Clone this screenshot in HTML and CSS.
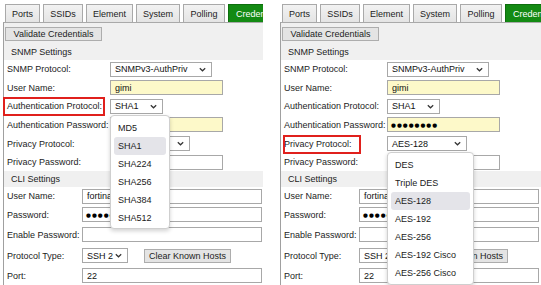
FILE: index.html
```html
<!DOCTYPE html>
<html>
<head>
<meta charset="utf-8">
<link rel="stylesheet" href="styles.css">
</head>
<body>
<div class="page">
  <div class="panel panel-a">
    <div class="tabs">
      <div class="tab t-ports">Ports</div>
      <div class="tab t-ssids">SSIDs</div>
      <div class="tab t-element">Element</div>
      <div class="tab t-system">System</div>
      <div class="tab t-polling">Polling</div>
      <div class="tab active">Credentials</div>
    </div>
    <div class="body">
      <div class="btnrow"><button class="btn validate">Validate Credentials</button></div>
      <div class="section">SNMP Settings</div>
      <div class="row h18"><span class="label">SNMP Protocol:</span><div class="select w-snmp"><span>SNMPv3-AuthPriv</span><svg class="chev" width="7" height="5" viewBox="0 0 7 5"><path d="M0.8 1.2 L3.5 3.8 L6.2 1.2" fill="none" stroke="#333" stroke-width="1.2"/></svg></div></div>
      <div class="row h19"><span class="label">User Name:</span><div class="input yellow w-short">gimi</div></div>
      <div class="row h18"><span class="label"><span class="hl hl-a">Authentication Protocol:</span></span><div class="select w-auth"><span>SHA1</span><svg class="chev" width="7" height="5" viewBox="0 0 7 5"><path d="M0.8 1.2 L3.5 3.8 L6.2 1.2" fill="none" stroke="#333" stroke-width="1.2"/></svg></div></div>
      <div class="row h19"><span class="label">Authentication Password:</span><div class="input yellow w-short dots">●●●●●●●●</div></div>
      <div class="row h19"><span class="label">Privacy Protocol:</span><div class="select w-priv"><span>AES-128</span><svg class="chev" width="7" height="5" viewBox="0 0 7 5"><path d="M0.8 1.2 L3.5 3.8 L6.2 1.2" fill="none" stroke="#333" stroke-width="1.2"/></svg></div></div>
      <div class="row h18"><span class="label">Privacy Password:</span><div class="input w-short"></div></div>
      <div class="section cli">CLI Settings</div>
      <div class="row h18 cli-row"><span class="label">User Name:</span><div class="input w-long">fortinadmin</div></div>
      <div class="row h19 cli-row"><span class="label">Password:</span><div class="input w-long dots">●●●●●●●●</div></div>
      <div class="row h21 cli-row"><span class="label">Enable Password:</span><div class="input w-long"></div></div>
      <div class="row h21 cli-row"><span class="label">Protocol Type:</span><div class="select w-ssh"><span>SSH 2</span><svg class="chev" width="7" height="5" viewBox="0 0 7 5"><path d="M0.8 1.2 L3.5 3.8 L6.2 1.2" fill="none" stroke="#333" stroke-width="1.2"/></svg></div><button class="btn clear">Clear Known Hosts</button></div>
      <div class="row h19 cli-row"><span class="label">Port:</span><div class="input w-long">22</div></div>
    </div>
    <ul class="popup popup-a">
      <li>MD5</li>
      <li class="sel">SHA1</li>
      <li>SHA224</li>
      <li>SHA256</li>
      <li>SHA384</li>
      <li>SHA512</li>
    </ul>
  </div>

  <div class="panel panel-b">
    <div class="tabs">
      <div class="tab t-ports">Ports</div>
      <div class="tab t-ssids">SSIDs</div>
      <div class="tab t-element">Element</div>
      <div class="tab t-system">System</div>
      <div class="tab t-polling">Polling</div>
      <div class="tab active">Credentials</div>
    </div>
    <div class="body">
      <div class="btnrow"><button class="btn validate">Validate Credentials</button></div>
      <div class="section">SNMP Settings</div>
      <div class="row h18"><span class="label">SNMP Protocol:</span><div class="select w-snmp"><span>SNMPv3-AuthPriv</span><svg class="chev" width="7" height="5" viewBox="0 0 7 5"><path d="M0.8 1.2 L3.5 3.8 L6.2 1.2" fill="none" stroke="#333" stroke-width="1.2"/></svg></div></div>
      <div class="row h19"><span class="label">User Name:</span><div class="input yellow w-short">gimi</div></div>
      <div class="row h18"><span class="label">Authentication Protocol:</span><div class="select w-auth"><span>SHA1</span><svg class="chev" width="7" height="5" viewBox="0 0 7 5"><path d="M0.8 1.2 L3.5 3.8 L6.2 1.2" fill="none" stroke="#333" stroke-width="1.2"/></svg></div></div>
      <div class="row h19"><span class="label">Authentication Password:</span><div class="input yellow w-short dots">●●●●●●●●</div></div>
      <div class="row h19"><span class="label"><span class="hl hl-b">Privacy Protocol:</span></span><div class="select w-priv"><span>AES-128</span><svg class="chev" width="7" height="5" viewBox="0 0 7 5"><path d="M0.8 1.2 L3.5 3.8 L6.2 1.2" fill="none" stroke="#333" stroke-width="1.2"/></svg></div></div>
      <div class="row h18"><span class="label">Privacy Password:</span><div class="input w-short"></div></div>
      <div class="section cli">CLI Settings</div>
      <div class="row h18 cli-row"><span class="label">User Name:</span><div class="input w-long">fortinadmin</div></div>
      <div class="row h19 cli-row"><span class="label">Password:</span><div class="input w-long dots">●●●●●●●●</div></div>
      <div class="row h21 cli-row"><span class="label">Enable Password:</span><div class="input w-long"></div></div>
      <div class="row h21 cli-row"><span class="label">Protocol Type:</span><div class="select w-ssh"><span>SSH 2</span><svg class="chev" width="7" height="5" viewBox="0 0 7 5"><path d="M0.8 1.2 L3.5 3.8 L6.2 1.2" fill="none" stroke="#333" stroke-width="1.2"/></svg></div><button class="btn clear">Clear Known Hosts</button></div>
      <div class="row h19 cli-row"><span class="label">Port:</span><div class="input w-long">22</div></div>
    </div>
    <ul class="popup popup-b">
      <li>DES</li>
      <li>Triple DES</li>
      <li class="sel">AES-128</li>
      <li>AES-192</li>
      <li>AES-256</li>
      <li>AES-192 Cisco</li>
      <li>AES-256 Cisco</li>
    </ul>
  </div>
</div>
</body>
</html>
```

FILE: styles.css
```css
* { box-sizing: border-box; }
html, body { margin: 0; padding: 0; background: #fff; }
body {
  font-family: "Liberation Sans", Arial, sans-serif;
  font-size: 9px;
  color: #1c1c1c;
  width: 541px;
  height: 285px;
  overflow: hidden;
}
.page {
  display: flex;
  gap: 14px;
  height: 285px;
}
.panel {
  position: relative;
  height: 285px;
  overflow: hidden;
  flex: none;
}
.panel-a { width: 263px; }
.panel-b { width: 264px; }

.tabs {
  display: flex;
  gap: 3px;
  padding: 4px 0 0 5px;
  height: 22px;
}
.tab {
  flex: none;
  height: 18px;
  border: 1px solid #a9a9a9;
  border-bottom: none;
  background: linear-gradient(#f2f2f2, #e4e4e4);
  display: flex;
  align-items: center;
  justify-content: center;
  white-space: nowrap;
  color: #1c1c1c;
}
.t-ports { width: 35px; }
.t-ssids { width: 40px; }
.t-element { width: 47px; }
.t-system { width: 44px; }
.t-polling { width: 42px; }
.tab.active {
  width: 70px;
  background: #138a13;
  border-color: #0d6e0d;
  color: #fff;
  justify-content: flex-start;
  padding-left: 7px;
}

.body {
  margin-left: 3px;
  border-left: 1px solid #a0a0a0;
  border-top: 1px solid #a9a9a9;
  background: #fff;
  height: 263px;
}
.btnrow {
  background: #f0f0f0;
  padding: 4px 0 2px 1px;
  height: 21px;
}
.btn {
  font: inherit;
  color: #1c1c1c;
  background: #e4e4e4;
  border: 1px solid #adadad;
  height: 14px;
  padding: 0;
  margin: 0;
  display: flex;
  align-items: center;
  justify-content: center;
  white-space: nowrap;
}
.validate { width: 97px; }
.section {
  background: #f0f0f0;
  height: 16px;
  padding-left: 7px;
  display: flex;
  align-items: center;
}
.row {
  display: flex;
  align-items: center;
  padding-left: 3px;
}
.h18 { height: 18px; }
.h19 { height: 19px; }
.h21 { height: 21px; }
.label {
  flex: none;
  width: 103px;
  white-space: nowrap;
}
.cli-row .label { width: 75px; }

.hl { position: relative; }
.hl::after {
  content: "";
  position: absolute;
  border: 2px solid #e0201c;
  top: -4px;
  bottom: -5px;
}
.hl-a::after { left: -4px; right: -3px; }
.hl-b::after { left: -1px; right: -9px; }

.select, .input {
  flex: none;
  height: 15px;
  border: 1px solid #a8a8a8;
  background: #fff;
  display: flex;
  align-items: center;
  padding-left: 4px;
  white-space: nowrap;
  overflow: hidden;
  color: #111;
}
.select { justify-content: space-between; padding-right: 5px; }
.chev { flex: none; }
.yellow { background: #fdf9c9; }
.w-snmp { width: 102px; }
.w-auth { width: 53px; }
.w-priv { width: 80px; }
.w-short { width: 113px; }
.w-long { width: 180px; }
.w-ssh { width: 46px; }
.clear { width: 87px; margin-left: 16px; height: 14px; }
.dots { font-family: "DejaVu Sans", sans-serif; font-size: 5.6px; letter-spacing: 1px; padding-left: 3px; color: #000; }

.popup {
  position: absolute;
  margin: 0;
  padding: 3px 0;
  list-style: none;
  background: #fff;
  border: 1px solid #cfcfcf;
  border-radius: 4px;
  box-shadow: 0 2px 4px rgba(0,0,0,0.18);
}
.popup li {
  height: 18px;
  margin: 0 3px;
  padding-left: 4px;
  display: flex;
  align-items: center;
  border-radius: 3px;
  color: #1a1a1a;
  white-space: nowrap;
}
.popup li.sel { background: #e4e4e9; }
.popup-a { left: 110px; top: 115px; width: 60px; height: 114px; }
.popup-b { left: 110px; top: 152px; width: 87px; height: 133px; }
```
